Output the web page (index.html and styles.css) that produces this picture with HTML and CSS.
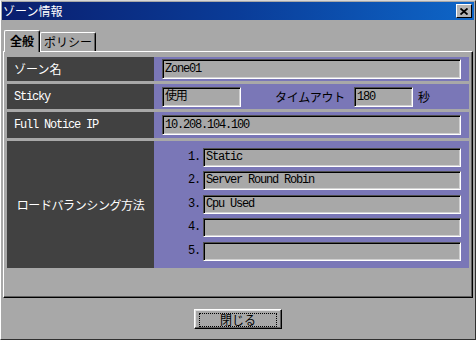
FILE: index.html
```html
<!DOCTYPE html>
<html lang="ja">
<head>
    <meta charset="UTF-8">
    <meta name="viewport" content="width=device-width, initial-scale=1.0">
    <title>ゾーン情報</title>
    <link rel="stylesheet" href="styles.css">
</head>
<body>
    <div class="window">
        <!-- Title bar -->
        <div class="titlebar">
            <span class="title">ゾーン情報</span>
            <span class="close-btn">
                <svg width="8" height="7" viewBox="0 0 8 7">
                    <path d="M0.5 0.5 L7.5 6.5 M7.5 0.5 L0.5 6.5" stroke="#000" stroke-width="1.8" fill="none"/>
                </svg>
            </span>
        </div>

        <!-- Tabs -->
        <div class="tabs">
            <div class="tab active">全般</div>
            <div class="tab">ポリシー</div>
        </div>

        <!-- General panel -->
        <div class="panel">
            <div class="form-grid">
                <div class="label">ゾーン名</div>
                <div class="value">
                    <div class="field mono full">Zone01</div>
                </div>

                <div class="label mono">Sticky</div>
                <div class="value">
                    <div class="field mono sticky">使用</div>
                    <span class="timeout-label">タイムアウト</span>
                    <div class="field mono timeout">180</div>
                    <span class="unit">秒</span>
                </div>

                <div class="label mono">Full Notice IP</div>
                <div class="value">
                    <div class="field mono full">10.208.104.100</div>
                </div>

                <div class="label center">ロードバランシング方法</div>
                <div class="value methods">
                    <span class="num mono">1.</span><div class="field mono">Static</div>
                    <span class="num mono">2.</span><div class="field mono">Server Round Robin</div>
                    <span class="num mono">3.</span><div class="field mono">Cpu Used</div>
                    <span class="num mono">4.</span><div class="field mono"></div>
                    <span class="num mono">5.</span><div class="field mono"></div>
                </div>
            </div>
        </div>

        <div class="footer">
            <button class="btn"><span>閉じる</span></button>
        </div>
    </div>
</body>
</html>
```

FILE: styles.css
```css
body {
    margin: 0;
    font-family: "Noto Sans CJK JP", sans-serif;
    font-size: 12px;
    line-height: 14px;
    color: #000;
}
.window {
    width: 476px;
    height: 340px;
    box-sizing: border-box;
    background: #a8a8a8;
    border: 1px solid;
    border-color: #d8d8d8 #303030 #303030 #fff;
    padding: 1px;
}
.titlebar {
    height: 18px;
    display: flex;
    align-items: center;
    justify-content: space-between;
    background: linear-gradient(90deg, #0a1e6e, #0a3c98 50%, #0e66c8);
    color: #fff;
    padding: 0 2px 0 1px;
}
.close-btn {
    width: 16px;
    height: 14px;
    box-sizing: border-box;
    background: #b4b4b4;
    border: 1px solid;
    border-color: #fff #000 #000 #fff;
    display: flex;
    align-items: center;
    justify-content: center;
}
.tabs {
    display: flex;
    align-items: flex-end;
    height: 21px;
    margin: 10px 0 0 2px;
}
.tab {
    box-sizing: border-box;
    height: 19px;
    width: 56px;
    text-align: center;
    padding-top: 2px;
    border: 1px solid;
    border-bottom: none;
    border-color: #fff #000 #000 #fff;
    box-shadow: inset -1px 0 #606060;
    border-radius: 2px 2px 0 0;
}
.tab.active {
    position: relative;
    z-index: 1;
    width: 36px;
    height: 22px;
    margin-bottom: -1px;
    padding-top: 3px;
    font-weight: bold;
    background: #a8a8a8;
}
.panel {
    height: 247px;
    box-sizing: border-box;
    margin: 0 1px;
    border: 1px solid;
    border-color: #fff #000 #000 #fff;
    box-shadow: inset -1px -1px #606060;
    padding: 5px 3px 0;
}
.form-grid {
    display: grid;
    grid-template-columns: 147px 1fr;
    grid-template-rows: 24px 25px 26px 127px;
    row-gap: 3px;
}
.label {
    background: #414141;
    color: #fff;
    display: flex;
    align-items: center;
    padding-left: 7px;
}
.label.center {
    justify-content: center;
    padding-left: 0;
    letter-spacing: -0.4px;
}
.value {
    background: #7a77b7;
    display: flex;
    align-items: center;
    padding: 0 8px;
}
.mono {
    font-family: "Liberation Mono", "Noto Sans CJK JP", monospace;
    letter-spacing: -1.2px;
}
.field {
    box-sizing: border-box;
    height: 20px;
    line-height: 18px;
    background: #a8a8a8;
    border: 1px solid;
    border-color: #505050 #fff #fff #505050;
    box-shadow: inset 1px 1px #000, inset -1px -1px #d0d0d0;
    padding: 0 2px;
    white-space: nowrap;
}
.field.full {
    flex: 1;
}
.field.sticky {
    width: 79px;
}
.timeout-label {
    margin-left: 34px;
    letter-spacing: -0.3px;
}
.field.timeout {
    width: 59px;
    margin-left: 9px;
}
.unit {
    margin-left: 5px;
}
.value.methods {
    display: grid;
    grid-template-columns: 16px 1fr;
    grid-auto-rows: 19px;
    column-gap: 3px;
    row-gap: 4.4px;
    align-content: start;
    padding: 7px 8px 0 30px;
}
.methods .field {
    height: 19px;
    line-height: 17px;
}
.num {
    text-align: right;
    line-height: 21px;
}
.footer {
    display: flex;
    justify-content: center;
    margin-top: 11px;
}
.btn {
    width: 88px;
    height: 20px;
    box-sizing: border-box;
    background: #a8a8a8;
    border: 1px solid;
    border-color: #fff #000 #000 #fff;
    box-shadow: inset -1px -1px #606060, inset 1px 1px #e0e0e0;
    padding: 3px 4px;
    font-family: "Noto Sans CJK JP", sans-serif;
    font-size: 12px;
    line-height: 11px;
    color: #000;
}
.btn span {
    display: block;
    height: 12px;
    border: 1px dotted #000;
}
```
